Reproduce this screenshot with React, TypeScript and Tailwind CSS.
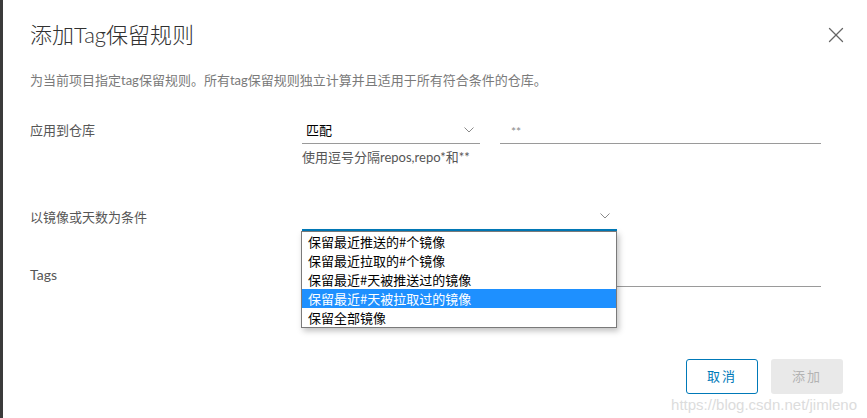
import { X } from "lucide-react";

const sans = { fontFamily: '"Lato", "Noto Sans CJK SC", sans-serif' };

const options = [
  "保留最近推送的#个镜像",
  "保留最近拉取的#个镜像",
  "保留最近#天被推送过的镜像",
  "保留最近#天被拉取过的镜像",
  "保留全部镜像",
];

function Chevron() {
  return (
    <svg width="10" height="6" viewBox="0 0 10 6" fill="none" className="shrink-0">
      <path d="M0.5 0.5 L5 5 L9.5 0.5" stroke="#8a8a8a" strokeWidth="1" />
    </svg>
  );
}

export default function App() {
  return (
    <div
      className="relative w-[867px] h-[418px] overflow-hidden bg-white border-l-[3px] border-[#3b3b3b] pl-[27px] pr-[24px] text-[#565656]"
      style={sans}
    >
      <div className="flex items-start justify-between">
        <h1 className="mt-[20px] text-[22px] leading-[30px] font-light text-[#313131]">添加Tag保留规则</h1>
        <button className="mt-[22px] mr-[-6px] text-[#666]">
          <X size={26} strokeWidth={1.15} />
        </button>
      </div>

      <p className="mt-[21px] text-[13px] leading-[18px] text-[#7a7a7a]">
        为当前项目指定tag保留规则。所有tag保留规则独立计算并且适用于所有符合条件的仓库。
      </p>

      <div className="mt-[32px] grid grid-cols-[272px_1fr] text-[13px]">
        <div className="leading-[18px]">应用到仓库</div>
        <div>
          <div className="flex gap-[20px] pr-[22px]">
            <div className="w-[178px] h-[23px] flex items-start justify-between border-b border-[#9a9a9a] pl-[4px] pr-[6px]">
              <span className="leading-[18px] text-black">匹配</span>
              <span className="mt-[6px]"><Chevron /></span>
            </div>
            <div className="flex-1 h-[23px] border-b border-[#9a9a9a] pl-[11px] pt-[3px] leading-[16px] text-[#8a8a8a] text-[12px]">**</div>
          </div>
          <div className="mt-[5px] leading-[16px]">使用逗号分隔repos,repo*和**</div>
        </div>
      </div>

      <div className="mt-[43px] grid grid-cols-[272px_1fr] text-[13px]">
        <div className="leading-[18px]">以镜像或天数为条件</div>
        <div className="relative">
          <div className="w-[315px] h-[23px] flex items-start justify-end border-b-2 border-[#0079b8] pr-[7px]">
            <span className="mt-[5px]"><Chevron /></span>
          </div>
          <ul
            className="absolute left-[-1px] top-[23px] z-10 w-[316px] border border-[#7a7a7a] bg-white shadow-[2px_3px_6px_rgba(0,0,0,0.25)] text-[13px] text-black"
            style={{ fontFamily: '"Noto Sans CJK SC", sans-serif' }}
          >
            {options.map((o, i) => (
              <li
                key={o}
                className={`h-[19px] leading-[19px] pl-[6px] ${i === 3 ? "bg-[#1e90ff] text-white" : ""}`}
              >
                {o}
              </li>
            ))}
          </ul>
        </div>
      </div>

      <div className="mt-[35px] grid grid-cols-[272px_1fr] text-[13px]">
        <div className="leading-[18px] text-[14px]">Tags</div>
        <div className="h-[21px] mr-[22px] border-b border-[#9a9a9a]" />
      </div>

      <div className="mt-[72px] flex justify-end gap-[13px]">
        <button className="w-[72px] h-[35px] rounded-[3px] border border-[#0079b8] text-[13px] tracking-[2px] text-[#0079b8]">
          取消
        </button>
        <button className="w-[72px] h-[35px] rounded-[3px] bg-[#e9e9e9] text-[13px] tracking-[2px] text-[#b3b3b3]">
          添加
        </button>
      </div>

      <div
        className="absolute right-[10px] bottom-[4px] text-[15px] leading-[18px] text-[#dcdcdc]"
        style={{ fontFamily: '"Liberation Sans", Arial, sans-serif' }}
      >
        https://blog.csdn.net/jimleno
      </div>
    </div>
  );
}
